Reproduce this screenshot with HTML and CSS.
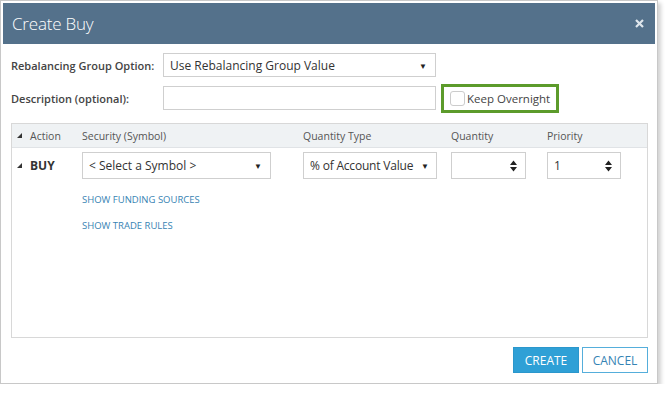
FILE: index.html
```html
<!DOCTYPE html>
<html lang="en">
<head>
    <meta charset="UTF-8">
    <title>Create Buy</title>
    <link rel="stylesheet" href="styles.css">
</head>
<body>
    <div class="dialog">
        <div class="dialog-header">
            <span class="dialog-title">Create Buy</span>
            <svg class="dialog-close" width="9" height="9" viewBox="0 0 9 9">
                <path d="M1 1L8 8M8 1L1 8" stroke="#dfe6ec" stroke-width="2.2"/>
            </svg>
        </div>

        <div class="dialog-body">
            <div class="form-row">
                <label class="form-label">Rebalancing Group Option:</label>
                <div class="select wide">
                    <span>Use Rebalancing Group Value</span>
                    <span class="caret">&#9660;</span>
                </div>
            </div>
            <div class="form-row">
                <label class="form-label">Description (optional):</label>
                <div class="text-input wide"></div>
                <div class="keep-box">
                    <span class="checkbox"></span>
                    <span>Keep Overnight</span>
                </div>
            </div>

            <div class="trade-panel">
                <div class="trade-grid trade-head">
                    <div class="cell-action"><span class="tri"></span>Action</div>
                    <div>Security (Symbol)</div>
                    <div>Quantity Type</div>
                    <div>Quantity</div>
                    <div>Priority</div>
                </div>
                <div class="trade-grid trade-row">
                    <div class="cell-action buy"><span class="tri"></span>BUY</div>
                    <div class="select symbol">
                        <span>&lt; Select a Symbol &gt;</span>
                        <span class="caret">&#9660;</span>
                    </div>
                    <div class="select qty-type">
                        <span>% of Account Value</span>
                        <span class="caret">&#9660;</span>
                    </div>
                    <div class="spin qty">
                        <span></span>
                        <svg class="spin-btn" width="7" height="12" viewBox="0 0 7 12">
                            <path d="M0 5L3.5 0.5L7 5Z M0 7L3.5 11.5L7 7Z" fill="#222"/>
                        </svg>
                    </div>
                    <div class="spin prio">
                        <span>1</span>
                        <svg class="spin-btn" width="7" height="12" viewBox="0 0 7 12">
                            <path d="M0 5L3.5 0.5L7 5Z M0 7L3.5 11.5L7 7Z" fill="#222"/>
                        </svg>
                    </div>
                </div>
                <div class="trade-links">
                    <a class="link">SHOW FUNDING SOURCES</a>
                    <a class="link">SHOW TRADE RULES</a>
                </div>
            </div>

            <div class="dialog-footer">
                <button class="btn btn-primary">CREATE</button>
                <button class="btn btn-default">CANCEL</button>
            </div>
        </div>
    </div>
</body>
</html>
```

FILE: styles.css
```css
body {
    margin: 0;
    background: #fff;
    font-family: "Open Sans", "Noto Sans", sans-serif;
    color: #444;
}
.dialog {
    width: 652px;
    height: 378px;
    border: 1px solid #c8c8c8;
    padding: 2px;
    background: #fff;
    box-shadow: 3px 3px 4px rgba(0, 0, 0, 0.18);
    display: flex;
    flex-direction: column;
}
.dialog-header {
    height: 41px;
    background: #54718b;
    color: #fff;
    display: flex;
    align-items: center;
    justify-content: space-between;
    padding: 0 11px 0 9px;
    flex-shrink: 0;
}
.dialog-title {
    font-size: 17px;
    font-weight: 300;
    letter-spacing: -0.2px;
}
.dialog-body {
    flex: 1;
    display: flex;
    flex-direction: column;
    padding: 9px 7px 0 8px;
}
.form-row {
    display: flex;
    align-items: center;
    height: 24px;
    margin-bottom: 9px;
}
.form-label {
    width: 152px;
    font-size: 11px;
    font-weight: 600;
    color: #444;
}
.wide {
    width: 273px;
}
.select, .text-input, .spin {
    box-sizing: border-box;
    border: 1px solid #cfcfcf;
    background: #fff;
    height: 24px;
    display: flex;
    align-items: center;
    justify-content: space-between;
    padding: 0 8px 0 6px;
    font-size: 12px;
    color: #333;
}
.caret {
    font-size: 8px;
    color: #222;
}
.keep-box {
    display: flex;
    align-items: center;
    gap: 2px;
    box-sizing: border-box;
    height: 29px;
    margin-left: 5px;
    padding: 0 6px 0 6px;
    border: 3px solid #5c9b2b;
    font-size: 11.5px;
    color: #444;
}
.checkbox {
    width: 13px;
    height: 13px;
    border: 1px solid #ccc;
    border-radius: 3px;
    background: #fff;
}
.trade-panel {
    margin-top: 4px;
    height: 215px;
    border: 1px solid #d8d8d8;
    box-sizing: border-box;
}
.trade-grid {
    display: grid;
    grid-template-columns: 70px 221px 148px 96px 1fr;
    align-items: center;
}
.trade-head {
    height: 23px;
    background: #eff2f4;
    border-bottom: 1px solid #e0e3e6;
    font-size: 10.5px;
    color: #555;
}
.cell-action {
    display: flex;
    align-items: center;
    padding-left: 5px;
}
.tri {
    width: 0;
    height: 0;
    border-left: 5px solid transparent;
    border-bottom: 5px solid #333;
    margin-right: 8px;
}
.buy {
    font-size: 12px;
    font-weight: 700;
    color: #333;
}
.trade-row {
    padding-top: 4px;
}
.trade-row .select, .trade-row .spin {
    height: 27px;
    font-size: 12px;
}
.symbol {
    width: 189px;
}
.qty-type {
    width: 134px;
    padding-right: 7px;
}
.qty-type span:first-child {
    letter-spacing: -0.2px;
}
.qty {
    width: 75px;
}
.prio {
    width: 74px;
}
.trade-links {
    display: flex;
    flex-direction: column;
    align-items: flex-start;
    gap: 13px;
    padding: 14px 0 0 70px;
}
.link {
    font-size: 9.5px;
    color: #3783b3;
    cursor: pointer;
}
.dialog-footer {
    display: flex;
    justify-content: flex-end;
    gap: 3px;
    margin-top: 9px;
}
.btn {
    height: 26px;
    font-family: inherit;
    font-size: 12px;
    box-sizing: border-box;
    padding: 0;
    cursor: pointer;
}
.btn-primary {
    width: 66px;
    background: #2fa0d6;
    border: 1px solid #2b97cc;
    color: #fff;
}
.btn-default {
    width: 66px;
    background: #fff;
    border: 1px solid #55aedb;
    color: #3583b4;
}
```
